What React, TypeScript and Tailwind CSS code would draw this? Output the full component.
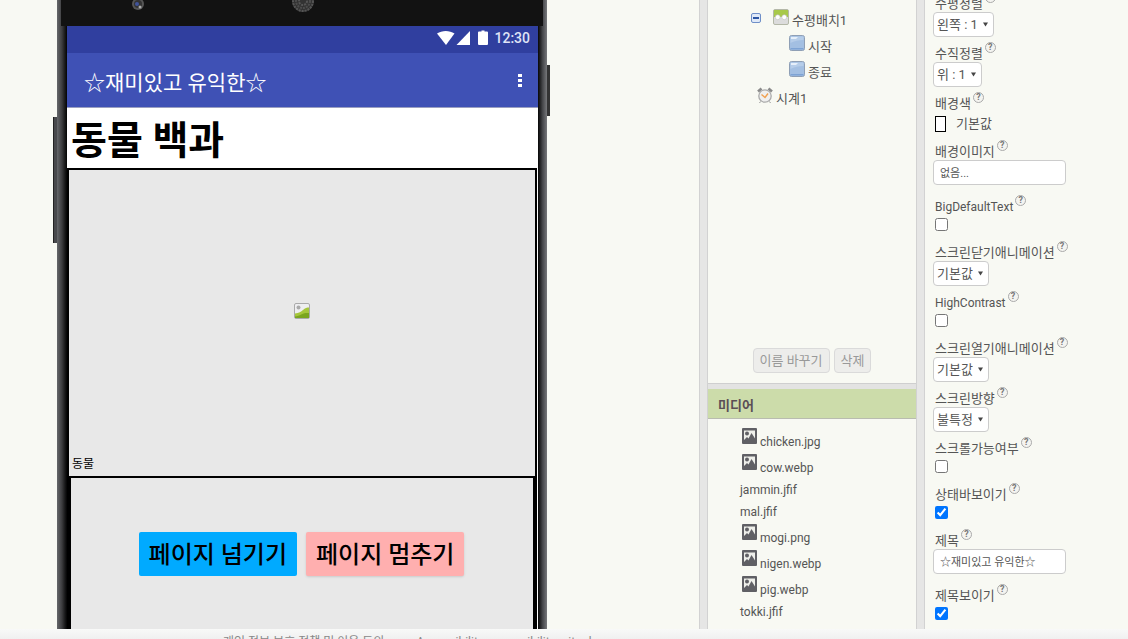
import React, { useState } from "react";
import { twMerge } from "tailwind-merge";

const mediaFiles = [
  "chicken.jpg",
  "cow.webp",
  "jammin.jfif",
  "mal.jfif",
  "mogi.png",
  "nigen.webp",
  "pig.webp",
  "tokki.jfif",
];

const StatusIcons = () => (
  <svg width="53" height="16" viewBox="0 0 53 16" fill="#fff" aria-hidden="true">
    <path d="M1 3.500C6 0 13.500 0 18.500 3.500L10 15Z" />
    <path d="M34 1V15H20.500Z" />
    <path d="M43 1.500h2.500V.500h3v1H51a1 1 0 0 1 1 1V14a1 1 0 0 1-1 1h-8a1 1 0 0 1-1-1V2.500a1 1 0 0 1 1-1Z" />
  </svg>
);

const PictureIcon = () => (
  <svg width="16" height="16" viewBox="0 0 16 16" aria-hidden="true">
    <rect x=".5" y=".5" width="15" height="15" rx="1.500" fill="#eeeef0" stroke="#aaa" />
    <circle cx="4.500" cy="4.500" r="2" fill="#aaa" />
    <path d="M1 10.500C5 10 7 9 9 7 11 5 13 4.500 15 4.500V15H1Z" fill="#a5c63b" />
    <path d="M1 15V13.500C6 13 9 10 11.500 10 13 10 14 10 15 10V15Z" fill="#7aa51f" />
  </svg>
);

const MediaIcon = () => (
  <svg width="16" height="16" viewBox="0 0 16 16" aria-hidden="true">
    <rect width="15" height="16" rx="1" fill="#606065" />
    <rect x="2" y="2.500" width="11" height="10.500" fill="#eeefea" />
    <circle cx="5" cy="5.500" r="2" fill="#606065" />
    <path d="M2 13.500V12L5 9l1.500 1.500L9.500 5l3.500 5.500v3Z" fill="#606065" />
  </svg>
);

const ArrangementIcon = () => (
  <svg width="16" height="16" viewBox="0 0 16 16" aria-hidden="true">
    <rect x=".5" y=".5" width="15" height="15" rx="1.500" fill="#dcdcdc" stroke="#b4b8a8" />
    <path d="M1 1h14v7H1Z" fill="#a8c94a" />
    <circle cx="4.700" cy="8.200" r="2.500" fill="#fff" stroke="#bbb" strokeWidth=".6" />
    <circle cx="11.300" cy="8.200" r="2.500" fill="#fff" stroke="#bbb" strokeWidth=".6" />
  </svg>
);

const ButtonIcon = () => (
  <svg width="16" height="16" viewBox="0 0 16 16" aria-hidden="true">
    <rect x=".5" y=".5" width="15" height="15" rx="2" fill="#a3bfe2" stroke="#8f9fb5" />
    <path d="M1.500 1.500h13V5C10 5 5 6 1.500 8Z" fill="#b6cde9" />
    <path d="M2 2h7l-2 2H2Z" fill="#e6effa" />
    <path d="M1.500 13h13v1.500h-13Z" fill="#7ea3d4" />
  </svg>
);

const ClockIcon = () => (
  <svg width="16" height="17" viewBox="0 0 16 17" aria-hidden="true">
    <path d="M1 4.500L4.500 1.500M15 4.500L11.500 1.500" stroke="#8a8a8a" strokeWidth="2.600" />
    <path d="M3.500 14.500L2.500 16M12.500 14.500L13.500 16" stroke="#999" />
    <circle cx="8" cy="9" r="6.200" fill="#efefef" stroke="#aaa" strokeWidth="1.300" />
    <path d="M4.500 7.500L8 10.500 11 6.500" fill="none" stroke="#f0a050" strokeWidth="1.400" />
  </svg>
);

const Phone = () => (
  <div className="relative flex w-[490px] flex-1 flex-col bg-black">
    <span className="absolute top-[117px] -left-1 h-[126px] w-1 border-l border-[#222] bg-[#48494c]" />
    <span className="absolute top-[65px] -right-[3px] h-[51px] w-[3px] bg-[#333]" />
    <div className="absolute inset-y-0 left-0 w-[10px] bg-linear-to-r from-[#66686b] via-[#3c3c3e] to-[#050505]" />
    <div className="absolute inset-y-0 right-0 w-[9px] bg-linear-to-l from-[#77787b] via-[#444548] to-[#080808]" />
    <div className="relative ml-1 mr-1 h-[26px] shrink-0 bg-[#121212]">
      <svg className="absolute top-0 left-[70px]" width="14" height="11" viewBox="0 0 14 11" aria-hidden="true">
        <circle cx="7" cy="4" r="6" fill="#555" />
        <circle cx="7" cy="4" r="4" fill="#333" />
        <circle cx="6" cy="4" r="2" fill="#40539a" />
        <circle cx="9" cy="7" r="1.500" fill="#aaa" />
      </svg>
      <svg className="absolute top-0 left-[230px]" width="24" height="13" viewBox="0 0 24 13" aria-hidden="true">
        <circle cx="12" cy="1" r="11" fill="#333" />
        <circle cx="12" cy="1" r="10" fill="none" stroke="#555" strokeWidth="2" strokeDasharray="2 1" />
        <circle cx="12" cy="1" r="7" fill="none" stroke="#4c4c4c" strokeWidth="2" strokeDasharray="2 1" />
        <circle cx="12" cy="1" r="4" fill="none" stroke="#555" strokeWidth="2" strokeDasharray="2 1" />
      </svg>
    </div>
    <div className="relative ml-[10px] mr-[9px] flex flex-1 flex-col bg-white">
      <div className="flex h-[27px] shrink-0 items-center justify-end gap-[5px] bg-[#303f9f] pr-2 pb-1 text-sm font-medium text-[#dfe3f6]">
        <StatusIcons />
        12:30
      </div>
      <div className="flex h-[55px] shrink-0 items-center justify-between border-b border-[#9a9fc0] bg-[#3f51b5] pr-[14px] pl-[17px] text-white">
        <h1 className="pt-2 text-[21px]">☆재미있고 유익한☆</h1>
        <button aria-label="메뉴" className="flex w-2 flex-col items-center gap-[2px]">
          <span className="h-[3px] w-1 bg-white" />
          <span className="h-[3px] w-1 bg-white" />
          <span className="h-[3px] w-1 bg-white" />
        </button>
      </div>
      <div className="flex h-[60px] shrink-0 items-center pt-[6px] pl-1 text-[39px] font-bold text-black">
        동물 백과
      </div>
      <div className="mr-px flex flex-1 flex-col border-2 border-b-0 border-black bg-[#e8e8e8]">
        <div className="relative flex h-[306px] shrink-0 items-center justify-center pr-px pb-6">
          <PictureIcon />
          <span className="absolute bottom-1 left-[3px] text-xs text-black">동물</span>
        </div>
        <div className="flex flex-1 items-center justify-center gap-[9px] border-2 border-b-0 border-black pr-px">
          <button className="h-11 rounded-xs bg-[#00aaff] px-[10px] pt-[2px] text-2xl font-medium text-black">
            페이지 넘기기
          </button>
          <button className="h-11 rounded-xs bg-[#ffafaf] px-[10px] pt-[2px] text-2xl font-medium text-black shadow-sm">
            페이지 멈추기
          </button>
        </div>
      </div>
    </div>
  </div>
);

const TreeItem = ({
  icon,
  label,
  className,
}: {
  icon: React.ReactNode;
  label: string;
  className?: string;
}) => (
  <li className={twMerge("flex h-[26px] items-start gap-[3px]", className)}>
    <span className="pt-[2px]">{icon}</span>
    <span className="pt-1 leading-5">{label}</span>
  </li>
);

const ComponentTree = () => {
  const [open, setOpen] = useState(true);

  return (
    <section className="flex flex-1 flex-col border-b border-[#cfcfcf] pt-[7px]">
      <ul className="flex-1">
        <li>
          <div className="flex pl-[43px]">
            <button
              aria-label="접기"
              aria-expanded={open}
              className="mt-[6px] mr-3 flex size-[10px] items-center justify-center rounded-xs border border-[#6f8fc8] bg-[#dfe9f8]"
              onClick={() => setOpen((prev) => !prev)}
            >
              <span className="h-[2px] w-[6px] bg-[#2c55a3]" />
            </button>
            <ul>
              <TreeItem icon={<ArrangementIcon />} label="수평배치1" />
            </ul>
          </div>
          {open && (
            <ul className="pl-[81px]">
              <TreeItem icon={<ButtonIcon />} label="시작" />
              <TreeItem icon={<ButtonIcon />} label="종료" />
            </ul>
          )}
        </li>
        <TreeItem icon={<ClockIcon />} label="시계1" className="pl-[49px]" />
      </ul>
      <div className="mb-[10px] flex justify-center gap-1 text-[#999]">
        <button disabled className="h-[25px] rounded-sm border border-[#dadada] bg-[#ededeb] px-[6px]">
          이름 바꾸기
        </button>
        <button disabled className="h-[25px] rounded-sm border border-[#dadada] bg-[#ededeb] px-[6px]">
          삭제
        </button>
      </div>
    </section>
  );
};

const Media = () => (
  <section className="h-60 shrink-0">
    <h2 className="flex h-[30px] items-center border-b border-[#b9bcb0] bg-[#ccdcaa] pt-1 pl-[10px] font-bold text-[#5b4e56]">
      미디어
    </h2>
    <ul className="pt-[9px] text-xs">
      {mediaFiles.map((name) => {
        const plain = name.endsWith(".jfif");
        return (
          <li
            key={name}
            className={twMerge("flex items-start gap-[2px] pl-[34px]", plain ? "h-[22px] pl-8" : "h-[26px]")}
          >
            {!plain && <MediaIcon />}
            <span className={twMerge("leading-5", !plain && "pt-1")}>{name}</span>
          </li>
        );
      })}
    </ul>
  </section>
);

const Field = ({
  id,
  label,
  className,
  labelClass,
  children,
}: {
  id: string;
  label: string;
  className?: string;
  labelClass?: string;
  children: React.ReactNode;
}) => (
  <div className={className}>
    <div className="flex h-5 items-start gap-[2px] pl-[2px]">
      <label htmlFor={id} className={twMerge("pt-[2px] leading-5", labelClass)}>
        {label}
      </label>
      <button
        aria-label="도움말"
        className="flex size-[11px] items-center justify-center rounded-full border border-[#aaa] bg-[#f4f4f0] text-[9px] leading-none font-bold text-[#777]"
      >
        ?
      </button>
    </div>
    {children}
  </div>
);

const SelectField = ({ id, label, value }: { id: string; label: string; value: string }) => (
  <Field id={id} label={label} className="h-[50px]">
    <div className="relative w-fit">
      <select
        id={id}
        className="block h-[25px] appearance-none rounded-sm border border-[#ccc] bg-white pr-[15px] pl-[3px]"
      >
        <option>{value}</option>
      </select>
      <svg className="pointer-events-none absolute top-[10px] right-[6px]" width="5" height="5" viewBox="0 0 5 5" aria-hidden="true">
        <path d="M0 .5H5L2.500 4.500Z" fill="#444" />
      </svg>
    </div>
  </Field>
);

const CheckField = ({
  id,
  label,
  checked,
  labelClass,
}: {
  id: string;
  label: string;
  checked?: boolean;
  labelClass?: string;
}) => (
  <Field id={id} label={label} labelClass={labelClass} className="h-[46px]">
    <input
      id={id}
      type="checkbox"
      defaultChecked={checked}
      className="mt-[3px] ml-[2px] block size-[13px] accent-[#0075ff]"
    />
  </Field>
);

const TextField = ({ id, label, value }: { id: string; label: string; value: string }) => (
  <Field id={id} label={label} className="h-[55px]">
    <input
      id={id}
      defaultValue={value}
      className="block h-[25px] w-[133px] rounded-sm border border-[#ccc] bg-white px-[6px] pb-[2px] text-[11px]"
    />
  </Field>
);

const Properties = () => (
  <aside className="w-[203px] shrink-0 overflow-hidden pl-2">
    <div className="-mt-2">
      <SelectField id="halign" label="수평정렬" value="왼쪽 : 1" />
      <SelectField id="valign" label="수직정렬" value="위 : 1" />
      <Field id="bgcolor" label="배경색" className="h-12">
        <button id="bgcolor" className="flex items-center gap-[10px] pt-[2px] pl-[2px] leading-5">
          <span className="h-4 w-[11px] border border-black bg-white" />
          기본값
        </button>
      </Field>
      <TextField id="bgimage" label="배경이미지" value="없음..." />
      <CheckField id="bigtext" label="BigDefaultText" labelClass="text-xs leading-5" />
      <SelectField id="closeanim" label="스크린닫기애니메이션" value="기본값" />
      <CheckField id="contrast" label="HighContrast" labelClass="text-xs leading-5" />
      <SelectField id="openanim" label="스크린열기애니메이션" value="기본값" />
      <SelectField id="orientation" label="스크린방향" value="불특정" />
      <CheckField id="scrollable" label="스크롤가능여부" />
      <CheckField id="statusbar" label="상태바보이기" checked />
      <TextField id="title" label="제목" value="☆재미있고 유익한☆" />
      <CheckField id="titlevisible" label="제목보이기" checked />
    </div>
  </aside>
);

const App = () => {
  return (
    <div className="flex h-screen flex-col overflow-hidden bg-[#f8f9f3] font-[Roboto,'Noto_Sans_CJK_KR',sans-serif] text-[13px] text-[#555]">
      <div className="flex min-h-0 flex-1 overflow-hidden">
        <main className="flex flex-1 flex-col pl-[57px]">
          <Phone />
        </main>
        <div className="w-[9px] shrink-0 border-x border-[#d2d2d2] bg-[#e6e6e5]" />
        <div className="flex w-[208px] shrink-0 flex-col">
          <ComponentTree />
          <div className="h-[5px] shrink-0 bg-[#e3e3e2]" />
          <Media />
        </div>
        <div className="w-[9px] shrink-0 border-x border-[#d2d2d2] bg-[#e6e6e5]" />
        <Properties />
      </div>
      <footer className="flex h-[10px] shrink-0 items-start gap-8 overflow-hidden bg-linear-to-b from-[#f8f9f8] to-[#f0f0f0] pt-[5px] pl-[223px] text-xs leading-4 text-[#888]">
        <a href="#privacy">개인 정보 보호 정책 및 이용 동의</a>
        <a href="#accessibility">Accessibility: accessibility.mit.edu</a>
      </footer>
    </div>
  );
};

export default App;
